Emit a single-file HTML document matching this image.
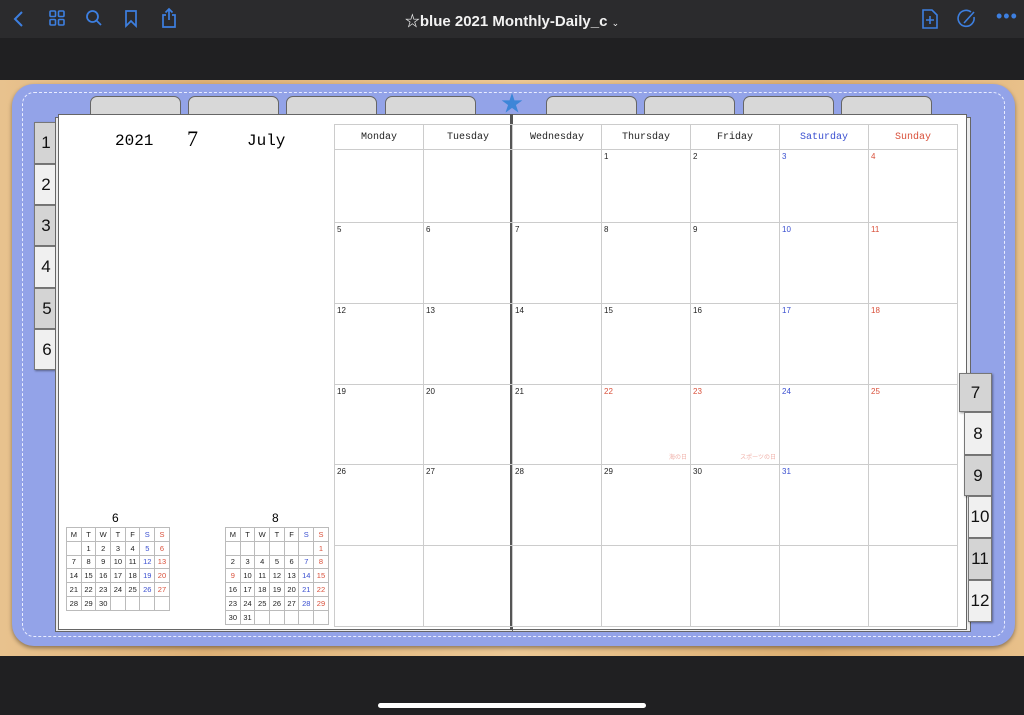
<!DOCTYPE html>
<html><head><meta charset="utf-8"><style>
*{margin:0;padding:0;box-sizing:border-box}
body{width:1024px;height:715px;overflow:hidden;background:#1f1f21;font-family:"Liberation Sans","Noto Sans CJK JP",sans-serif;position:relative}
.top{position:absolute;left:0;top:0;width:1024px;height:38px;background:#2b2b2d}
.band{position:absolute;left:0;top:38px;width:1024px;height:42px;background:#202022}
.wood{position:absolute;left:0;top:80px;width:1024px;height:576px;background:linear-gradient(90deg,#e8c28e,#ddb075 20%,#ecc895 50%,#dcae70 80%,#e8c08a)}
.bottom{position:absolute;left:0;top:656px;width:1024px;height:59px;background:#202022}
.home{position:absolute;left:378px;top:703px;width:268px;height:5px;border-radius:3px;background:#fff}
.binder{position:absolute;left:12px;top:84px;width:1003px;height:562px;border-radius:22px;background:#93a3e8;box-shadow:0 2px 4px rgba(0,0,0,.4)}
.stitch{position:absolute;left:22px;top:92px;width:983px;height:545px;border:1.5px dashed #e8ecff;border-radius:12px}
.ttab{position:absolute;top:96px;height:22px;width:91px;background:#d8d8d8;border:1px solid #666;border-radius:7px 7px 0 0}
.page{position:absolute;background:#fff;border:1px solid #666}
.ltab,.rtab{position:absolute;border:1px solid #777;font-size:17px;display:flex;align-items:center;justify-content:center;color:#111;box-shadow:1px 1px 2px rgba(0,0,0,.4)}
table.cal{position:absolute;left:334px;top:124px;border-collapse:collapse;table-layout:fixed}
table.cal td{border:1px solid #ccc;width:89px;vertical-align:top;font-size:8px;padding:2px 2px;color:#222}
table.cal tr.h td{height:25px;text-align:center;vertical-align:middle;font-family:"Liberation Mono",monospace;font-size:10px}
table.mini{position:absolute;border-collapse:collapse;table-layout:fixed}
table.mini td{border:1px solid #bbb;width:14.7px;height:13.8px;text-align:center;font-size:7.5px;color:#222;padding:0}
body table td.b,table.cal tr.h td.b{color:#3a4fd0}
body table td.r,table.cal tr.h td.r{color:#d9503a}
.ico{position:absolute;top:9px}
</style></head><body>
<div class="top"></div>
<svg class="ico" style="left:10px" width="16" height="20" viewBox="0 0 16 20"><path d="M12 3 L5 10 L12 17" stroke="#3d7fe0" stroke-width="2" fill="none"/></svg>
<svg class="ico" style="left:48px" width="18" height="18" viewBox="0 0 18 18" fill="none" stroke="#3d7fe0" stroke-width="1.6"><rect x="2" y="2" width="5.5" height="5.5" rx="1"/><rect x="10.5" y="2" width="5.5" height="5.5" rx="1"/><rect x="2" y="10.5" width="5.5" height="5.5" rx="1"/><rect x="10.5" y="10.5" width="5.5" height="5.5" rx="1"/></svg>
<svg class="ico" style="left:85px" width="18" height="18" viewBox="0 0 18 18" fill="none" stroke="#3d7fe0" stroke-width="1.8"><circle cx="7.5" cy="7.5" r="5.5"/><path d="M11.5 11.5 L16 16"/></svg>
<svg class="ico" style="left:123px" width="16" height="20" viewBox="0 0 16 20" fill="none" stroke="#3d7fe0" stroke-width="1.7"><path d="M3 2 H13 V17 L8 12 L3 17 Z"/></svg>
<svg class="ico" style="left:160px;top:7px" width="18" height="22" viewBox="0 0 18 22" fill="none" stroke="#3d7fe0" stroke-width="1.7"><path d="M6 8 H3 V20 H15 V8 H12"/><path d="M9 2 V13 M5.5 5.5 L9 2 L12.5 5.5"/></svg>
<div style="position:absolute;left:0;top:10px;width:1024px;text-align:center;color:#f2f2f2;font-size:15px;font-weight:bold">☆blue 2021 Monthly-Daily_c <span style="font-size:9px;font-weight:normal">⌄</span></div>
<svg class="ico" style="left:921px;top:8px" width="18" height="22" viewBox="0 0 18 22" fill="none" stroke="#3d7fe0" stroke-width="1.6"><path d="M2 2 H11 L16 7 V20 H2 Z"/><path d="M9 8 V16 M5 12 H13"/></svg>
<svg class="ico" style="left:956px;top:8px" width="22" height="22" viewBox="0 0 22 22" fill="none" stroke="#3d7fe0" stroke-width="1.6"><path d="M15 4 A8 8 0 1 0 18 9"/><path d="M8 15 L18 4"/></svg>
<div style="position:absolute;left:996px;top:6px;color:#3d7fe0;font-size:18px;letter-spacing:1px">•••</div>
<div class="band"></div>
<div class="wood"></div>
<div class="bottom"></div><div class="home"></div>
<div class="binder"></div><div class="stitch"></div>
<div class="ttab" style="left:90px"></div><div class="ttab" style="left:188px"></div><div class="ttab" style="left:286px"></div><div class="ttab" style="left:385px"></div>
<div class="ttab" style="left:546px"></div><div class="ttab" style="left:644px"></div><div class="ttab" style="left:743px"></div><div class="ttab" style="left:841px"></div>
<div style="position:absolute;left:501px;top:86px;color:#3d86d8;font-size:22px">★</div>
<div class="ltab" style="left:34px;top:122px;width:24px;height:42px;background:#d4d4d4">1</div>
<div class="ltab" style="left:34px;top:164px;width:24px;height:41px;background:#f0f0f0">2</div>
<div class="ltab" style="left:34px;top:205px;width:24px;height:41px;background:#d4d4d4">3</div>
<div class="ltab" style="left:34px;top:246px;width:24px;height:42px;background:#f0f0f0">4</div>
<div class="ltab" style="left:34px;top:288px;width:26px;height:41px;background:#d4d4d4">5</div>
<div class="ltab" style="left:34px;top:329px;width:26px;height:41px;background:#f0f0f0">6</div>
<div class="page" style="left:55px;top:117px;width:460px;height:515px;background:#ececec"></div>
<div class="page" style="left:58px;top:114px;width:455px;height:516px"></div>
<div class="page" style="left:512px;top:117px;width:459px;height:515px;background:#ececec"></div>
<div class="page" style="left:512px;top:114px;width:455px;height:516px"></div>
<div style="position:absolute;left:510px;top:114px;width:3px;height:516px;background:#555"></div>
<div class="rtab" style="left:959px;top:373px;width:33px;height:39px;background:#d4d4d4">7</div>
<div class="rtab" style="left:964px;top:412px;width:28px;height:43px;background:#f0f0f0">8</div>
<div class="rtab" style="left:964px;top:455px;width:28px;height:41px;background:#d4d4d4">9</div>
<div class="rtab" style="left:968px;top:496px;width:24px;height:42px;background:#f0f0f0">10</div>
<div class="rtab" style="left:968px;top:538px;width:24px;height:42px;background:#d4d4d4">11</div>
<div class="rtab" style="left:968px;top:580px;width:24px;height:42px;background:#f0f0f0">12</div>
<div style="position:absolute;left:115px;top:132px;font-size:16px;font-family:'Liberation Mono',monospace">2021</div>
<div style="position:absolute;left:187px;top:126px;font-size:22px;font-family:'Liberation Serif',serif">7</div>
<div style="position:absolute;left:247px;top:132px;font-size:16px;font-family:'Liberation Mono',monospace">July</div>
<table class="cal">
<tr class="h"><td>Monday</td><td>Tuesday</td><td>Wednesday</td><td>Thursday</td><td>Friday</td><td class="b">Saturday</td><td class="r">Sunday</td></tr>
<tr style="height:73px"><td></td><td></td><td></td><td>1</td><td>2</td><td class="b">3</td><td class="r">4</td></tr>
<tr style="height:81px"><td>5</td><td>6</td><td>7</td><td>8</td><td>9</td><td class="b">10</td><td class="r">11</td></tr>
<tr style="height:81px"><td>12</td><td>13</td><td>14</td><td>15</td><td>16</td><td class="b">17</td><td class="r">18</td></tr>
<tr style="height:80px"><td>19</td><td>20</td><td>21</td><td class="r" style="position:relative">22<span style="position:absolute;right:3px;bottom:3px;font-size:6px;color:#f0b0a8">海の日</span></td><td class="r" style="position:relative">23<span style="position:absolute;right:3px;bottom:3px;font-size:6px;color:#f0b0a8">スポーツの日</span></td><td class="b">24</td><td class="r">25</td></tr>
<tr style="height:81px"><td>26</td><td>27</td><td>28</td><td>29</td><td>30</td><td class="b">31</td><td></td></tr>
<tr style="height:81px"><td></td><td></td><td></td><td></td><td></td><td></td><td></td></tr>
</table>
<div style="position:absolute;left:112px;top:511px;font-size:12px">6</div>
<table class="mini" style="left:66px;top:527px">
<tr><td>M</td><td>T</td><td>W</td><td>T</td><td>F</td><td class="b">S</td><td class="r">S</td></tr>
<tr><td></td><td>1</td><td>2</td><td>3</td><td>4</td><td class="b">5</td><td class="r">6</td></tr>
<tr><td>7</td><td>8</td><td>9</td><td>10</td><td>11</td><td class="b">12</td><td class="r">13</td></tr>
<tr><td>14</td><td>15</td><td>16</td><td>17</td><td>18</td><td class="b">19</td><td class="r">20</td></tr>
<tr><td>21</td><td>22</td><td>23</td><td>24</td><td>25</td><td class="b">26</td><td class="r">27</td></tr>
<tr><td>28</td><td>29</td><td>30</td><td></td><td></td><td></td><td></td></tr>
</table>
<div style="position:absolute;left:272px;top:511px;font-size:12px">8</div>
<table class="mini" style="left:225px;top:527px">
<tr><td>M</td><td>T</td><td>W</td><td>T</td><td>F</td><td class="b">S</td><td class="r">S</td></tr>
<tr><td></td><td></td><td></td><td></td><td></td><td></td><td class="r">1</td></tr>
<tr><td>2</td><td>3</td><td>4</td><td>5</td><td>6</td><td class="b">7</td><td class="r">8</td></tr>
<tr><td class="r">9</td><td>10</td><td>11</td><td>12</td><td>13</td><td class="b">14</td><td class="r">15</td></tr>
<tr><td>16</td><td>17</td><td>18</td><td>19</td><td>20</td><td class="b">21</td><td class="r">22</td></tr>
<tr><td>23</td><td>24</td><td>25</td><td>26</td><td>27</td><td class="b">28</td><td class="r">29</td></tr>
<tr><td>30</td><td>31</td><td></td><td></td><td></td><td></td><td></td></tr>
</table>
</body></html>
